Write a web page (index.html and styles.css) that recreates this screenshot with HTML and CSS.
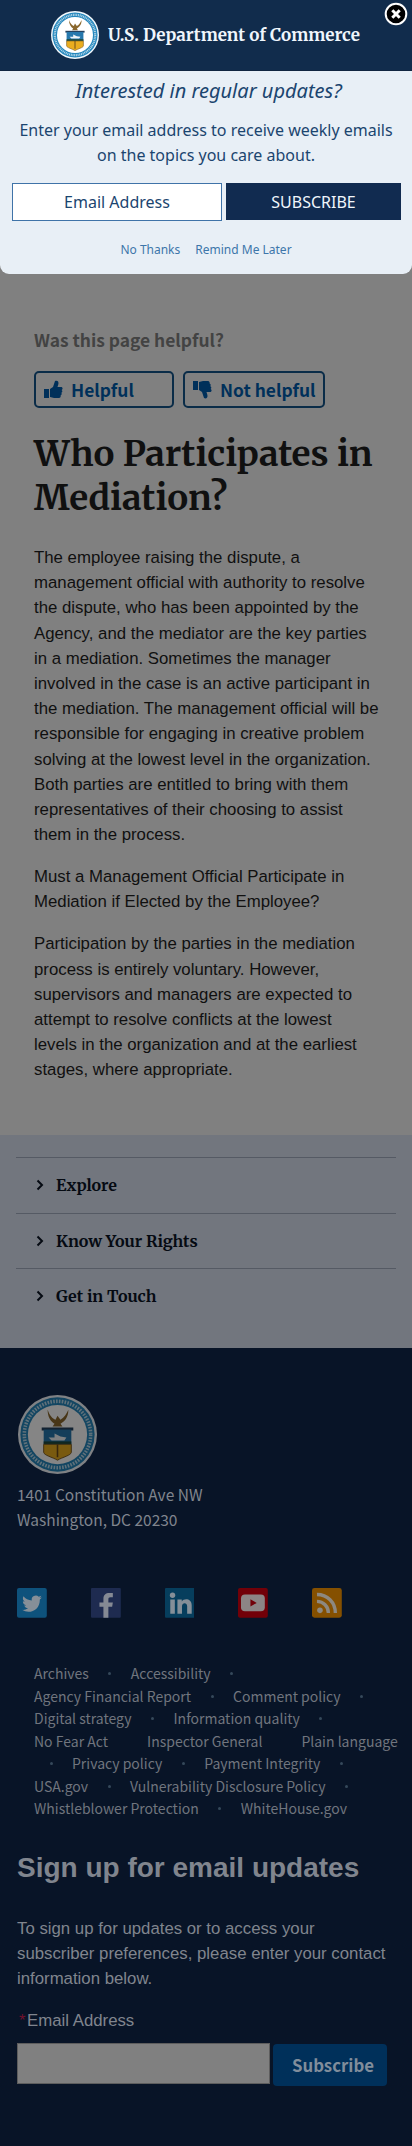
FILE: index.html
```html
<!DOCTYPE html>
<html lang="en">
<head>
<meta charset="utf-8">
<title>Who Participates in Mediation? | U.S. Department of Commerce</title>
<link rel="stylesheet" href="styles.css">
</head>
<body>
<svg class="defs" width="0" height="0" aria-hidden="true">
  <symbol id="seal" viewBox="0 0 80 80">
    <circle cx="40" cy="40" r="40" fill="#f4f9fd"/>
    <circle cx="40" cy="40" r="37.6" fill="#2587bd"/>
    <circle cx="40" cy="40" r="33.6" fill="none" stroke="#b9d9ea" stroke-width="3.6" stroke-dasharray="1.6 1.3"/>
    <circle cx="40" cy="40" r="30" fill="#fff"/>
    <path d="M30 15c2 6 5 9 8 10l2-4 3 4c4-2 6-6 8-10 0 8-4 12-8 14l2 3H35l2-3c-4-2-7-7-7-14z" fill="#8a672c"/>
    <path d="M24 33h32v3H24z" fill="#24415f"/>
    <path d="M26 35h28v15H26z" fill="#2678ad"/>
    <path d="M31 43h6v-4l6 3 6 1-2 3H34z" fill="#eef4f8"/>
    <path d="M26 47h28v3H26z" fill="#1c4a3f"/>
    <path d="M26 50h28v8c0 3-9 5-14 8-5-3-14-5-14-8z" fill="#e9ad1f" stroke="#7c5a23" stroke-width="1"/>
    <path d="M40 50v13" stroke="#6b4a18" stroke-width="1.6"/>
  </symbol>
</svg>

<main class="article">
  <p class="ask">Was this page helpful?</p>
  <div class="votes">
    <button class="vote vote-yes"><svg class="thumb" viewBox="0 0 20 20"><path d="M1 9h5v9H1zM7 9l3-2 2-6c2-1 4 0 3.400 3L14.500 7H18c2 0 2 2.500.6 3 1.200.8.9 2.400-.3 2.800.8 1 .4 2.200-.7 2.600.4 1.300-.3 2.400-1.600 2.600H11l-4-1z"/></svg>Helpful</button>
    <button class="vote vote-no"><svg class="thumb" viewBox="0 0 20 20"><path transform="matrix(1 0 0 -1 0 19)" d="M1 9h5v9H1zM7 9l3-2 2-6c2-1 4 0 3.400 3L14.500 7H18c2 0 2 2.500.6 3 1.200.8.9 2.400-.3 2.800.8 1 .4 2.200-.7 2.600.4 1.300-.3 2.400-1.600 2.600H11l-4-1z"/></svg>Not helpful</button>
  </div>
  <h1 class="title">Who Participates in<br>Mediation?</h1>
  <p class="copy">The employee raising the dispute, a<br>management official with authority to resolve<br>the dispute, who has been appointed by the<br>Agency, and the mediator are the key parties<br>in a mediation. Sometimes the manager<br>involved in the case is an active participant in<br>the mediation. The management official will be<br>responsible for engaging in creative problem<br>solving at the lowest level in the organization.<br>Both parties are entitled to bring with them<br>representatives of their choosing to assist<br>them in the process.</p>
  <p class="copy">Must a Management Official Participate in<br>Mediation if Elected by the Employee?</p>
  <p class="copy">Participation by the parties in the mediation<br>process is entirely voluntary. However,<br>supervisors and managers are expected to<br>attempt to resolve conflicts at the lowest<br>levels in the organization and at the earliest<br>stages, where appropriate.</p>
</main>

<nav class="sections">
  <a class="section"><svg class="chevron" viewBox="0 0 8 12"><path d="M1.500 1.500 6 6l-4.500 4.500"/></svg><span>Explore</span></a>
  <a class="section"><svg class="chevron" viewBox="0 0 8 12"><path d="M1.500 1.500 6 6l-4.500 4.500"/></svg><span>Know Your Rights</span></a>
  <a class="section"><svg class="chevron" viewBox="0 0 8 12"><path d="M1.500 1.500 6 6l-4.500 4.500"/></svg><span>Get in Touch</span></a>
</nav>

<footer class="footer">
  <svg class="footer-seal"><use href="#seal"/></svg>
  <p class="address">1401 Constitution Ave NW<br>Washington, DC 20230</p>
  <div class="social">
    <svg viewBox="0 0 30 30"><rect width="30" height="30" rx="2" fill="#0e527c"/><path fill="#858f98" d="M25 9.500c-.7.300-1.500.5-2.300.6.800-.5 1.500-1.300 1.800-2.200-.8.500-1.700.8-2.600 1a4.100 4.100 0 0 0-7 3.700c-3.400-.2-6.400-1.800-8.400-4.300-1.100 1.900-.6 4.200 1.300 5.500-.7 0-1.300-.2-1.900-.5 0 2 1.400 3.700 3.300 4.100-.6.200-1.200.2-1.900.1.500 1.600 2 2.800 3.800 2.800A8.300 8.300 0 0 1 5 22c7.500 4.800 18.200.6 18-10.500.8-.5 1.500-1.200 2-2z"/></svg>
    <svg viewBox="0 0 30 30"><rect width="30" height="30" rx="1" fill="#1e2b50"/><path fill="#858a94" d="M12.500 30V19H8.500v-4.500h4V11c0-4 2.400-6 6-6H22v4.300h-2.300c-1.800 0-2.200.9-2.200 2.200v3H22l-.7 4.500h-3.800v11z"/></svg>
    <svg viewBox="0 0 30 30"><rect width="30" height="30" rx="1" fill="#063e5d"/><g fill="#858f98"><circle cx="7.600" cy="7.300" r="2.700"/><path d="M5.300 11.700h4.600V26H5.300zM12.500 11.700h4.400v2c2-3.600 10-3.400 10 3.800V26h-4.600v-7.500c0-4.400-5.200-4-5.200 0V26h-4.600z"/></g></svg>
    <svg viewBox="0 0 30 30"><rect width="30" height="30" rx="2" fill="#720008"/><rect x="3" y="6.500" width="24" height="17" rx="4" fill="#8c8585"/><path fill="#720008" d="M12.500 11.300v7.400l6.300-3.700z"/></svg>
    <svg viewBox="0 0 30 30"><rect width="30" height="30" rx="2.500" fill="#855000"/><circle cx="8" cy="22.500" r="2.800" fill="#8d8880"/><path fill="none" stroke="#8d8880" stroke-width="3.400" d="M5 13.500c6.500 0 11.500 5 11.500 11.700M5 6.500c10.500 0 18.500 8 18.500 18.700"/></svg>
  </div>
  <ul class="links">
    <li><a>Archives</a><i></i><a>Accessibility</a><i></i></li>
    <li><a>Agency Financial Report</a><i></i><a>Comment policy</a><i></i></li>
    <li><a>Digital strategy</a><i></i><a>Information quality</a><i></i></li>
    <li><a>No Fear Act</a><i></i><a>Inspector General</a><i></i><a>Plain language</a></li>
    <li class="wrapped"><i></i><a>Privacy policy</a><i></i><a>Payment Integrity</a><i></i></li>
    <li><a>USA.gov</a><i></i><a>Vulnerability Disclosure Policy</a><i></i></li>
    <li><a>Whistleblower Protection</a><i></i><a>WhiteHouse.gov</a></li>
  </ul>
  <h2 class="signup-title">Sign up for email updates</h2>
  <p class="signup-copy">To sign up for updates or to access your<br>subscriber preferences, please enter your contact<br>information below.</p>
  <label class="signup-label" for="signup"><span class="star">*</span>Email Address</label>
  <div class="signup-row">
    <input class="signup-input" id="signup" type="text">
    <button class="signup-button">Subscribe</button>
  </div>
</footer>

<div class="dialog" role="dialog">
  <div class="dialog-head">
    <svg class="dialog-seal"><use href="#seal"/></svg>
    <span class="dialog-brand">U.S. Department of Commerce</span>
  </div>
  <p class="dialog-title">Interested in regular updates?</p>
  <p class="dialog-copy">Enter your email address to receive weekly emails<br>on the topics you care about.</p>
  <div class="dialog-form">
    <span class="dialog-input">Email Address</span>
    <span class="dialog-button">SUBSCRIBE</span>
  </div>
  <div class="dialog-links"><a>No Thanks</a><a>Remind Me Later</a></div>
  <svg class="dialog-close" viewBox="0 0 26 26"><circle cx="13" cy="13" r="10.300" fill="#000" stroke="#fff" stroke-width="2"/><path d="m9.300 9.300 7.400 7.400m0-7.400-7.400 7.400" stroke="#fff" stroke-width="3"/></svg>
</div>
</body>
</html>
```

FILE: styles.css
```css
* { box-sizing: border-box; }
body { margin: 0; background: #808080; font-family: "Liberation Sans", Arial, sans-serif; position: relative; width: 412px; height: 2146px; overflow-x: hidden; }
p, h1, h2, ul { margin: 0; padding: 0; white-space: nowrap; }
button { margin: 0; }
.defs { position: absolute; }

.article { height: 1135px; padding: 328px 34px 0; color: #101010; }
.ask { font: bold 17.4px/24px "Noto Sans CJK SC", sans-serif; color: #434343; }
.votes { display: flex; gap: 9px; margin-top: 19px; }
.vote { display: flex; align-items: center; gap: 8px; height: 37px; padding: 0 0 0 7px; border: 2px solid #0a2c48; border-radius: 5px; background: none; color: #00305a; font: bold 17.4px/24px "Noto Sans CJK SC", sans-serif; white-space: nowrap; }
.vote-yes { width: 140px; }
.vote-no { width: 142px; }
.thumb { width: 20px; height: 20px; fill: #00305a; flex: none; }
.title { margin-top: 24px; font: bold 35px/44px Merriweather, "Noto Serif", "DejaVu Serif Condensed", "DejaVu Serif", serif; }
.copy { margin-top: 16.8px; font-size: 16.8px; line-height: 25.2px; }
.title + .copy { margin-top: 25px; }

.sections { height: 213px; padding: 22px 16px 0; background: #72767e; }
.section { display: flex; align-items: center; gap: 12px; height: 55.500px; padding-left: 20px; border-top: 1px solid #555a64; color: #050a12; font: bold 16px/24px Merriweather, "Noto Serif", "DejaVu Serif Condensed", "DejaVu Serif", serif; }
.chevron { width: 8px; height: 12px; fill: none; stroke: #050a12; stroke-width: 2; }

.footer { height: 798px; padding: 47px 17px 0; background: #081427; color: #80858e; }
.footer-seal { display: block; width: 79px; height: 79px; margin-left: 1px; filter: brightness(.52); }
.address { margin-top: 8px; font: 15.500px/25.2px "Noto Sans CJK SC", sans-serif; }
.social { display: flex; gap: 44px; margin-top: 56px; }
.social svg { width: 29.800px; height: 29.800px; flex: none; }
.links { list-style: none; margin-top: 44px; padding-left: 17px; font: 14px/22.550px "Noto Sans CJK SC", sans-serif; color: #70757e; }
.links li { display: flex; align-items: center; height: 22.550px; }
.links i { width: 3px; height: 3px; margin: 0 19.500px; border-radius: 50%; background: #35485a; }
.links .wrapped { margin-left: -4px; }
.signup-title { margin-top: 30px; font-size: 28px; line-height: 36px; }
.signup-copy { margin-top: 30px; font-size: 16.8px; line-height: 25.2px; }
.signup-label { display: block; margin-top: 16px; font-size: 16.8px; line-height: 25.2px; }
.star { display: inline-block; width: 10px; padding-left: 2px; color: #70102d; }
.signup-row { display: flex; align-items: flex-start; gap: 3px; margin-top: 10px; }
.signup-input { width: 253px; height: 41px; border: 1px solid #5d5d5d; background: #808080; }
.signup-button { width: 114px; height: 42px; margin-top: 1px; padding: 0 0 0 6px; border: 0; border-radius: 4px; background: #00305a; color: #808d9b; font: bold 16.800px/24px "Noto Sans CJK SC", sans-serif; }

.dialog { position: absolute; top: 0; left: 0; width: 412px; height: 274px; border-radius: 0 0 9px 9px; background: #e8eff6; color: #1b456f; font-family: "Noto Sans", "Open Sans", sans-serif; text-align: center; }
.dialog-head { display: flex; align-items: center; gap: 9px; height: 71px; padding-left: 51px; background: #112c4c; color: #f0f6fc; border-bottom: 1px solid #102540; }
.dialog-seal { width: 48px; height: 48px; flex: none; }
.dialog-brand { font: bold 17px/24px Merriweather, "Noto Serif", "DejaVu Serif Condensed", "DejaVu Serif", serif; white-space: nowrap; }
.dialog-title { margin-top: 5px; padding-left: 5px; font-size: 20px; font-style: italic; line-height: 30px; }
.dialog-copy { margin-top: 12px; font-size: 16px; line-height: 25px; }
.dialog-form { display: flex; gap: 4px; margin: 15px 11px 0 12px; font-size: 16px; line-height: 36px; }
.dialog-input { width: 210px; height: 38px; border: 1px solid #3f73a8; background: #fff; }
.dialog-button { width: 175px; height: 37px; background: #112b50; color: #f0f6fc; line-height: 38px; }
.dialog-links { display: flex; justify-content: center; gap: 15px; margin-top: 18px; font-size: 12px; line-height: 22px; color: #3d76aa; }
.dialog-close { position: absolute; top: 1px; left: 383px; width: 26px; height: 26px; }
```
